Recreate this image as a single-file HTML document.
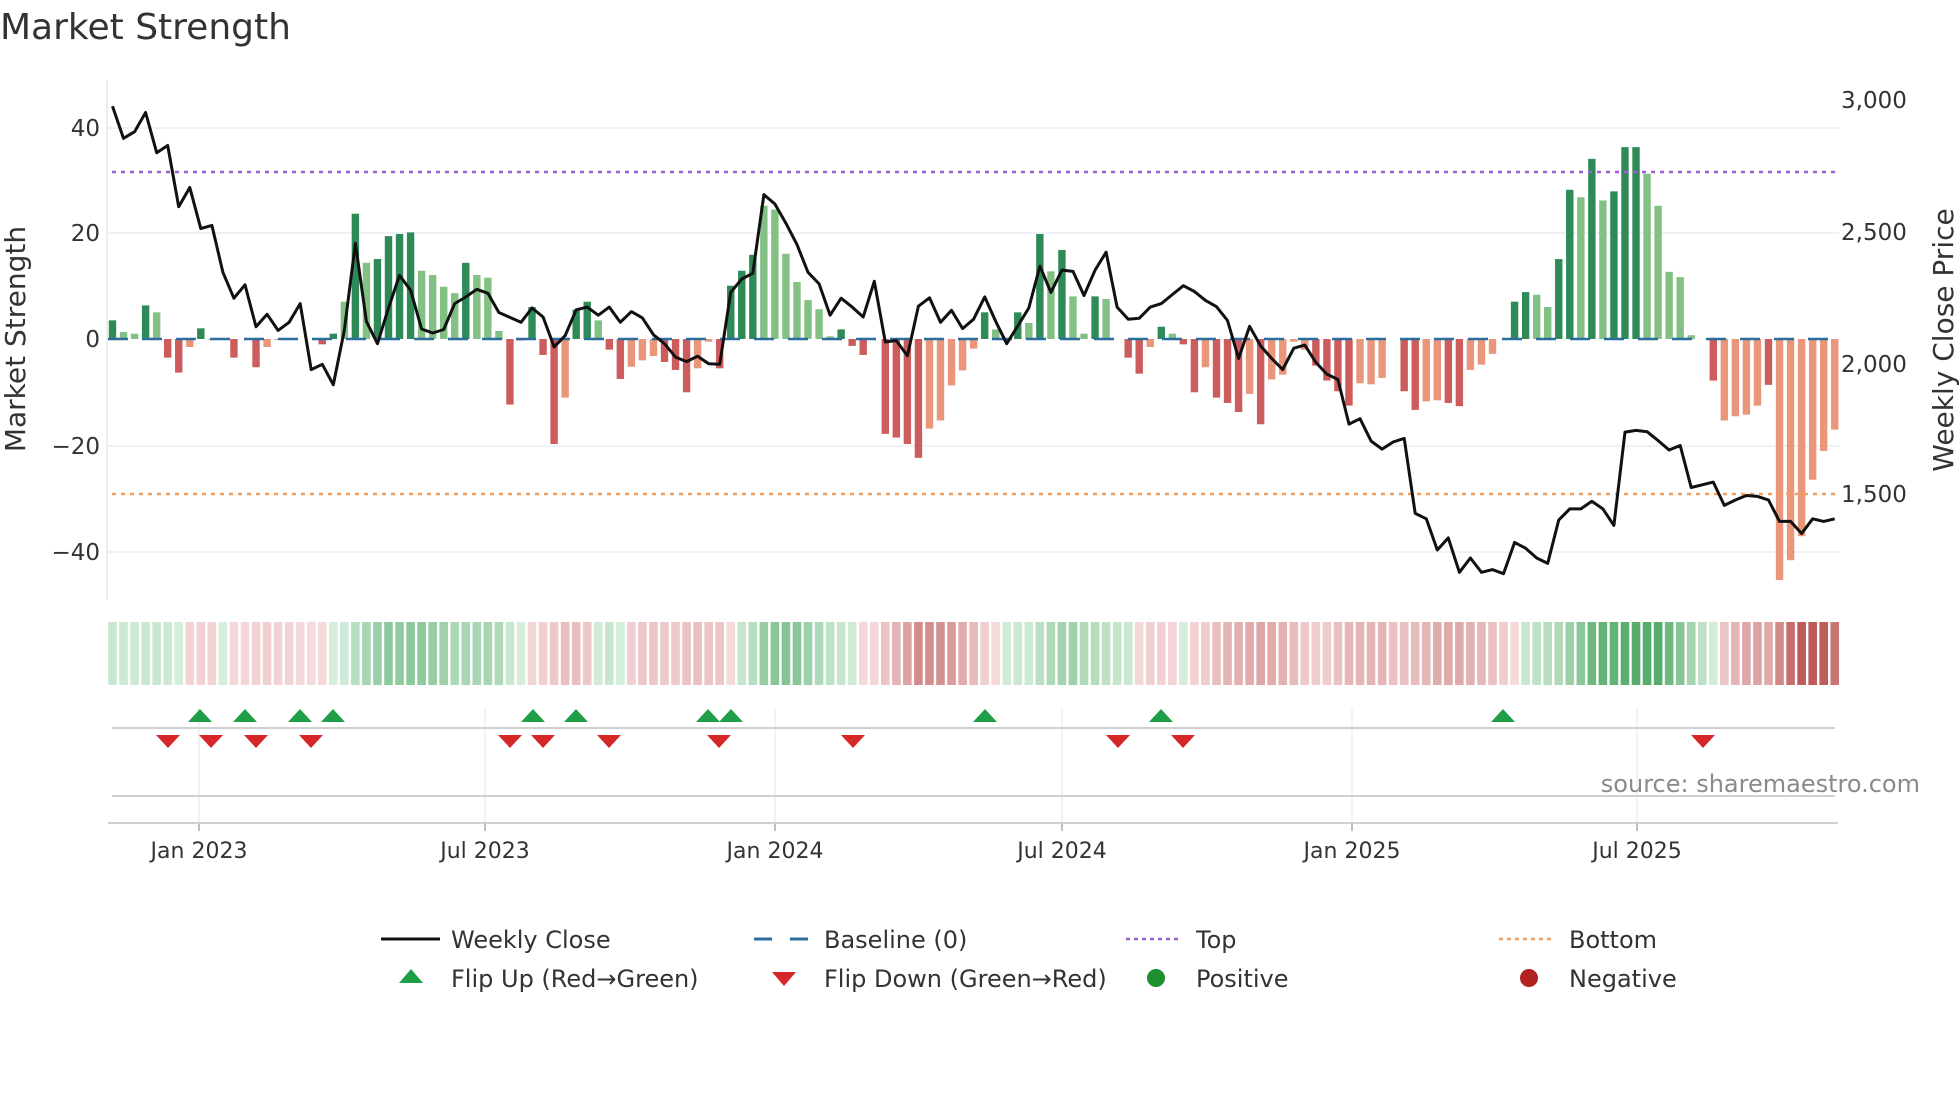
<!DOCTYPE html>
<html><head><meta charset="utf-8"><style>
html,body{margin:0;padding:0;background:#fff;}
body{width:1960px;height:1102px;overflow:hidden;font-family:"DejaVu Sans","Liberation Sans",sans-serif;}
svg text{font-family:"DejaVu Sans","Liberation Sans",sans-serif;}
</style></head><body>
<svg id="s" width="1960" height="1102" viewBox="0 0 1960 1102" xmlns="http://www.w3.org/2000/svg">
<text x="0" y="39" font-size="36" fill="#333">Market Strength</text>
<g stroke="#eef1f5" stroke-width="2">
<line x1="108" y1="128" x2="1839" y2="128"/><line x1="108" y1="233" x2="1839" y2="233"/>
<line x1="108" y1="446" x2="1839" y2="446"/><line x1="108" y1="552" x2="1839" y2="552"/>
</g>
<line x1="107" y1="80" x2="107" y2="600" stroke="#e8e8e8" stroke-width="1.5"/>
<g font-size="23" fill="#333" text-anchor="end">
<text x="100" y="136">40</text><text x="100" y="241">20</text><text x="100" y="347">0</text>
<text x="100" y="454">−20</text><text x="100" y="560">−40</text>
</g>
<g font-size="23" fill="#333">
<text x="1841" y="108">3,000</text><text x="1841" y="240">2,500</text><text x="1841" y="372">2,000</text><text x="1841" y="502">1,500</text>
</g>
<text transform="translate(25,339) rotate(-90)" font-size="28" fill="#333" text-anchor="middle">Market Strength</text>
<text transform="translate(1953,340) rotate(-90)" font-size="28" fill="#333" text-anchor="middle">Weekly Close Price</text>
<g id="bars"></g>
<line x1="108" y1="339" x2="1839" y2="339" stroke="#2b6e9e" stroke-width="2.5" stroke-dasharray="20 14"/>
<line x1="112" y1="172" x2="1839" y2="172" stroke="#9b5fd6" stroke-width="2.5" stroke-dasharray="4 5"/>
<line x1="112" y1="494" x2="1839" y2="494" stroke="#f0a060" stroke-width="2.5" stroke-dasharray="4 5"/>
<polyline id="price" fill="none" stroke="#111" stroke-width="3" stroke-linejoin="round"/>
<g id="heat"></g>
<g stroke="#eee" stroke-width="1.5" id="vg"></g>
<line x1="112" y1="728" x2="1835" y2="728" stroke="#d0d0d0" stroke-width="2"/>
<line x1="112" y1="796" x2="1835" y2="796" stroke="#d0d0d0" stroke-width="2"/>
<line x1="108" y1="823" x2="1838" y2="823" stroke="#d0d0d0" stroke-width="2"/>
<g id="mk"></g>
<text x="1920" y="792" font-size="24" fill="#8a8a8a" text-anchor="end">source: sharemaestro.com</text>
<g font-size="22" fill="#333" text-anchor="middle">
<text x="199" y="858">Jan 2023</text><text x="485" y="858">Jul 2023</text><text x="775" y="858">Jan 2024</text>
<text x="1062" y="858">Jul 2024</text><text x="1352" y="858">Jan 2025</text><text x="1637" y="858">Jul 2025</text>
</g>
<g font-size="24" fill="#333">
<line x1="381" y1="939" x2="440" y2="939" stroke="#111" stroke-width="3"/>
<text x="451" y="948">Weekly Close</text>
<line x1="754" y1="939" x2="772" y2="939" stroke="#2b6e9e" stroke-width="3"/><line x1="790" y1="939" x2="808" y2="939" stroke="#2b6e9e" stroke-width="3"/>
<text x="824" y="948">Baseline (0)</text>
<line x1="1126" y1="939" x2="1182" y2="939" stroke="#9b5fd6" stroke-width="2.5" stroke-dasharray="4 4"/>
<text x="1196" y="948">Top</text>
<line x1="1499" y1="939" x2="1555" y2="939" stroke="#f0a060" stroke-width="2.5" stroke-dasharray="4 4"/>
<text x="1569" y="948">Bottom</text>
<polygon points="399,983 423,983 411,969" fill="#1f9e48"/>
<text x="451" y="987">Flip Up (Red→Green)</text>
<polygon points="772,972 796,972 784,986" fill="#d62728"/>
<text x="824" y="987">Flip Down (Green→Red)</text>
<circle cx="1156" cy="978" r="9" fill="#1e8f2e"/>
<text x="1196" y="987">Positive</text>
<circle cx="1529" cy="978" r="9" fill="#b22222"/>
<text x="1569" y="987">Negative</text>
</g>
</svg>
<script>
var V=[3.5,1.3,1,6.3,5,-3.5,-6.3,-1.5,2,-0.2,0,-3.5,0,-5.3,-1.5,-0.2,0,0,0,-1,1,7,23.5,14.3,15,19.3,19.7,20,12.8,12,9.8,8.6,14.3,12,11.5,1.5,-12.3,-0.3,6,-3,-19.7,-11,5.5,7,3.5,-2,-7.5,-5.2,-4,-3.2,-4.3,-5.8,-10,-5.5,-0.5,-5.5,10,12.8,15.8,25,24.3,16,10.7,7.3,5.6,0.5,1.8,-1.3,-3,0,-17.8,-18.5,-19.7,-22.3,-16.8,-15.3,-8.7,-5.9,-1.8,
5,1.8,0,5,3,19.7,12.7,16.7,8,1,8,7.5,0,-3.5,-6.5,-1.5,2.3,1,-1,-10,-5.3,-11,-12,-13.7,-10.3,-16,-7.6,-6.7,-0.5,-2,-5,-7.8,-9.8,-12.5,-8.3,-8.5,-7.3,0,-9.8,-13.3,-11.7,-11.5,-12,-12.6,-5.8,-4.8,-2.8,0,7,8.8,8.3,6,15,28,26.6,33.8,26,27.7,36,36,31,25,12.6,11.6,0.7,0,-7.8,-15.3,-14.5,-14.2,-12.5,-8.6,-45.2,-41.5,-37,-26.4,-21,-17];
var D=[1,0,0,1,0,1,1,0,1,0,0,1,0,1,0,0,0,0,0,1,1,0,1,0,1,1,1,1,0,0,0,0,1,0,0,0,1,0,1,1,1,0,1,1,0,1,1,0,0,0,1,1,1,0,0,1,1,1,1,0,0,0,0,0,0,0,1,1,1,0,1,1,1,1,0,0,0,0,0,
1,0,0,1,0,1,0,1,0,0,1,0,0,1,1,0,1,0,1,1,0,1,1,1,0,1,0,0,0,0,1,1,1,1,0,0,0,0,1,1,0,0,1,1,0,0,0,0,1,1,0,0,1,1,0,1,0,1,1,1,0,0,0,0,0,1,1,0,0,0,0,1,0,0,0,0,0];
var P=[238,310,295,252,342,326,463,420,512,505,610,668,638,732,704,740,722,680,828,816,862,740,545,720,770,690,617,650,737,746,738,680,665,648,657,700,711,722,690,710,777,752,694,688,706,688,722,698,712,750,770,800,810,798,815,816,655,625,612,436,457,500,548,610,636,706,668,688,710,630,766,763,797,686,667,722,695,736,715,
665,720,770,730,690,596,655,605,608,662,605,565,688,715,713,688,680,660,640,653,673,687,718,803,731,775,803,828,780,773,812,838,850,950,938,988,1006,990,982,1150,1162,1232,1205,1282,1250,1282,1276,1285,1215,1228,1250,1262,1165,1140,1140,1123,1140,1177,968,964,967,987,1008,998,1092,1086,1080,1132,1120,1110,1112,1120,1168,1168,1195,1162,1168,1162];
var NS="http://www.w3.org/2000/svg";
function el(n,a,p){var e=document.createElementNS(NS,n);for(var k in a)e.setAttribute(k,a[k]);document.getElementById(p).appendChild(e);return e;}
function mix(a,b,t){return "rgb("+a.map(function(q,k){return Math.round(q+(b[k]-q)*t)}).join(",")+")";}
var x0=112.5,dx=11.04,pts=[];
for(var i=0;i<V.length;i++){
 var cx=x0+i*dx,v=V[i],h=Math.abs(v)*5.33,c;
 if(v>=0)c=(D[i]?"#2e8a57":"#82c183");else c=(D[i]?"#cd5c5c":"#e9967a");
 if(h>0.3)el("rect",{x:cx-3.7,y:v>=0?339-h:339,width:7.4,height:h,fill:c},"bars");
 pts.push(cx.toFixed(1)+","+(P[i]/2.24).toFixed(1));
 var s=0,n=0;for(var j=Math.max(0,i-3);j<=i;j++){s+=V[j];n++;}s/=n;
 var t=Math.min(1,Math.abs(s)/32),col;
 if(s>=0)col=mix([214,238,220],[86,172,106],t);else col=mix([245,218,220],[190,90,88],t);
 el("rect",{x:cx-4.3,y:622,width:8.6,height:63,fill:col},"heat");
}
document.getElementById("price").setAttribute("points",pts.join(" "));
[199,485,775,1062,1352,1637].forEach(function(x){el("line",{x1:x,y1:708,x2:x,y2:823},"vg");el("line",{x1:x,y1:823,x2:x,y2:831,stroke:"#aaa"},"vg");});
[200,245,300,333,533,576,708,731,985,1161,1503].forEach(function(x){el("polygon",{points:(x-12)+",722 "+(x+12)+",722 "+x+",709",fill:"#1f9e48"},"mk");});
[168,211,256,311,510,543,609,719,853,1118,1183,1703].forEach(function(x){el("polygon",{points:(x-12)+",735 "+(x+12)+",735 "+x+",748",fill:"#d62728"},"mk");});
</script>
</body></html>
